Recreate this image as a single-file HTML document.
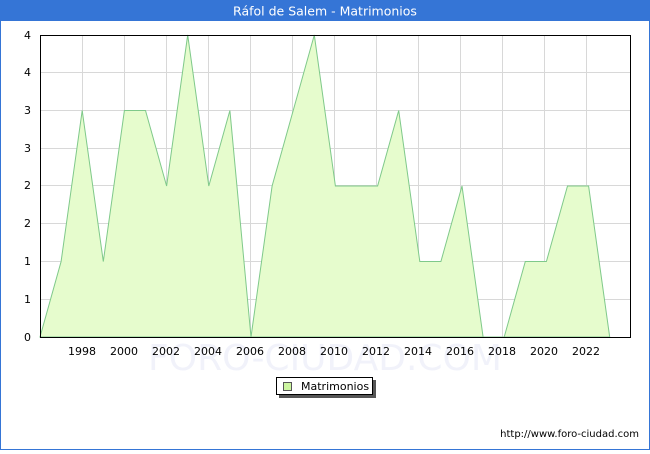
<!DOCTYPE html>
<html><head><meta charset="utf-8"><style>
body{margin:0;width:650px;height:450px;overflow:hidden;background:#fff;font-family:"DejaVu Sans","Liberation Sans",sans-serif}
</style></head><body>
<svg width="650" height="450" xmlns="http://www.w3.org/2000/svg" font-family="DejaVu Sans, Liberation Sans, sans-serif">
<rect x="0.5" y="0.5" width="649" height="449" fill="#fff" stroke="#3575d6"/>
<rect x="0" y="0" width="650" height="21" fill="#3575d6"/>
<text x="325" y="15.5" fill="#fff" font-size="12.5" text-anchor="middle">Ráfol de Salem - Matrimonios</text>
<g stroke="#d8d8d8" stroke-width="1">
<line x1="40" y1="299.5" x2="630" y2="299.5"/><line x1="40" y1="261.5" x2="630" y2="261.5"/><line x1="40" y1="223.5" x2="630" y2="223.5"/><line x1="40" y1="185.5" x2="630" y2="185.5"/><line x1="40" y1="148.5" x2="630" y2="148.5"/><line x1="40" y1="110.5" x2="630" y2="110.5"/><line x1="40" y1="72.5" x2="630" y2="72.5"/>
<line x1="82.5" y1="35" x2="82.5" y2="337"/><line x1="124.5" y1="35" x2="124.5" y2="337"/><line x1="166.5" y1="35" x2="166.5" y2="337"/><line x1="208.5" y1="35" x2="208.5" y2="337"/><line x1="250.5" y1="35" x2="250.5" y2="337"/><line x1="292.5" y1="35" x2="292.5" y2="337"/><line x1="334.5" y1="35" x2="334.5" y2="337"/><line x1="376.5" y1="35" x2="376.5" y2="337"/><line x1="418.5" y1="35" x2="418.5" y2="337"/><line x1="460.5" y1="35" x2="460.5" y2="337"/><line x1="502.5" y1="35" x2="502.5" y2="337"/><line x1="544.5" y1="35" x2="544.5" y2="337"/><line x1="586.5" y1="35" x2="586.5" y2="337"/>
</g>
<polygon fill="#e6fccd" stroke="#7fc98a" stroke-width="1" points="40,337 61.1,261.5 82.2,110.5 103.3,261.5 124.4,110.5 145.5,110.5 166.6,186 187.7,35 208.8,186 229.9,110.5 251,337 272.1,186 293.2,110.5 314.3,35 335.4,186 356.5,186 377.6,186 398.7,110.5 419.8,261.5 440.9,261.5 462,186 483.1,337 504.2,337 525.3,261.5 546.4,261.5 567.5,186 588.6,186 609.7,337"/>
<text x="325" y="370" fill="#eef0fa" font-size="36" text-anchor="middle" opacity="0.8">FORO-CIUDAD.COM</text>
<rect x="40.5" y="35.5" width="590" height="302" fill="none" stroke="#000"/>
<g font-size="11" fill="#000" text-anchor="end">
<text x="31" y="341">0</text><text x="31" y="303">1</text><text x="31" y="265">1</text><text x="31" y="227">2</text><text x="31" y="189">2</text><text x="31" y="152">3</text><text x="31" y="114">3</text><text x="31" y="76">4</text><text x="31" y="39">4</text>
</g>
<g font-size="11" fill="#000" text-anchor="middle">
<text x="82" y="355">1998</text><text x="124" y="355">2000</text><text x="166" y="355">2002</text><text x="208" y="355">2004</text><text x="250" y="355">2006</text><text x="292" y="355">2008</text><text x="334" y="355">2010</text><text x="376" y="355">2012</text><text x="418" y="355">2014</text><text x="460" y="355">2016</text><text x="502" y="355">2018</text><text x="544" y="355">2020</text><text x="586" y="355">2022</text>
</g>
<rect x="279" y="380" width="97" height="18" fill="#555"/>
<rect x="276.5" y="377.5" width="96" height="17" fill="#fff" stroke="#000"/>
<rect x="283.5" y="382.5" width="8" height="8" fill="#ccf5a0" stroke="#555"/>
<text x="301" y="390" font-size="11" fill="#000">Matrimonios</text>
<text x="639" y="437" font-size="10" fill="#000" text-anchor="end">http://www.foro-ciudad.com</text>
</svg>
</body></html>
